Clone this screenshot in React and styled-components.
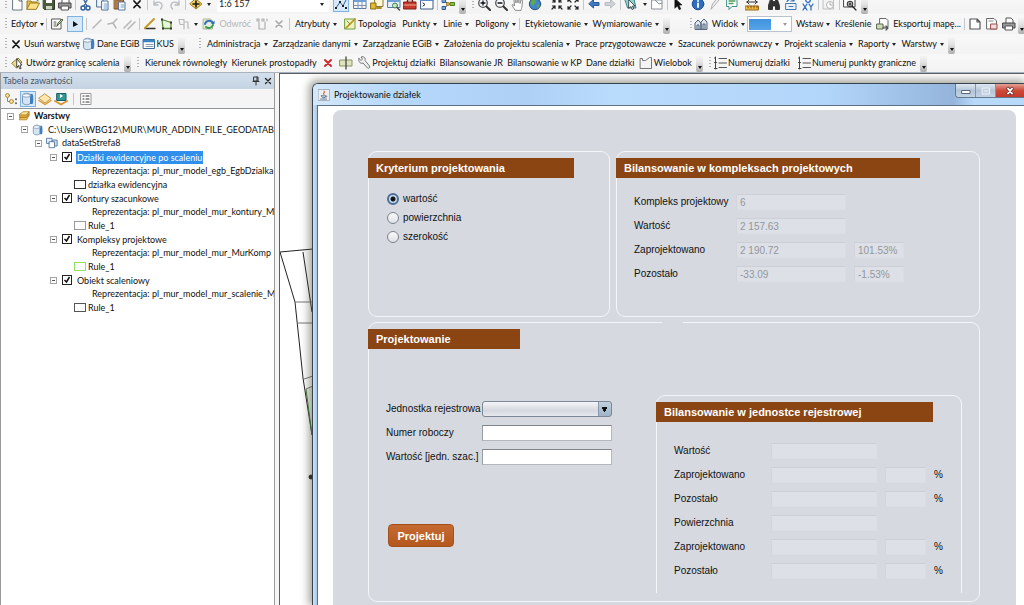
import { useId, useState } from 'react';
import styled, { createGlobalStyle, css } from 'styled-components';

const GlobalStyle = createGlobalStyle`
  * {
    box-sizing: border-box;
  }

  body {
    margin: 0;
    overflow: hidden;
    background: #f5f5f5;
    color: #111;
    font-family: Lato, 'Open Sans', sans-serif;
    font-size: 9px;
    line-height: 14px;
  }

  button,
  input,
  select {
    font: inherit;
    color: inherit;
    margin: 0;
  }
`;

const Page = styled.div`
  display: flex;
  flex-direction: column;
  height: 100vh;
`;

/* toolbars */

const Toolbars = styled.header`
  display: flex;
  flex-direction: column;
  flex: none;
  overflow: hidden;
`;

const Bar = styled.div`
  display: flex;
  align-items: center;
  flex: none;
  height: ${(p) => (p.$last ? 19 : 20)}px;
  padding-left: 5px;
  border-bottom: ${(p) => (p.$last ? '1px solid #a9b3be' : '0')};
  white-space: nowrap;
  background: linear-gradient(#f8f8f8, #f3f3f3);
`;

const CutBar = styled.div`
  display: flex;
  flex-direction: column;
  justify-content: flex-end;
  height: 14px;
  overflow: hidden;
`;

const Group = styled.div`
  display: flex;
  align-items: center;
  justify-content: space-between;
  flex: none;
  width: ${(p) => p.$w}px;
  margin-left: ${(p) => p.$ml ?? 4}px;
`;

const Grip = styled.span`
  flex: none;
  width: 2px;
  height: 12px;
  margin-left: ${(p) => p.$ml ?? 0}px;
  background: repeating-linear-gradient(#b4b4b4 0 1px, transparent 1px 3px);
`;

const Sep = styled.span`
  flex: none;
  width: 1px;
  height: 12px;
  margin: 0 3px;
  background: #c4c8cc;
`;

const Tool = styled.button`
  display: flex;
  align-items: center;
  gap: 1px;
  flex: none;
  height: 16px;
  padding: 0;
  border: 0;
  background: none;

  ${(p) =>
    p.$active &&
    css`
      justify-content: center;
      width: 16px;
      border: 1px solid #7fb2e0;
      background: #d6e9fa;
    `}

  &:disabled {
    color: #b5b5b5;
  }
`;

const Caret = styled.span`
  flex: none;
  margin-left: 2px;
  border: 2px solid transparent;
  border-top: 3px solid ${(p) => (p.$muted ? '#9a9a9a' : '#222')};
  border-bottom: 0;
`;

const More = styled.button`
  display: flex;
  align-items: flex-end;
  justify-content: center;
  flex: none;
  align-self: flex-end;
  width: 7px;
  height: 16px;
  margin-left: ${(p) => p.$ml ?? 4}px;
  padding: 0 0 3px;
  border: 0;
  border-radius: 0 0 2px 2px;
  background: linear-gradient(#f4f4f4, #e2e2e2 40%, #adadad);

  &::after {
    content: '';
    border: 2px solid transparent;
    border-top: 3px solid #111;
    border-bottom: 0;
  }
`;

const Combo = styled.button`
  display: flex;
  align-items: center;
  justify-content: space-between;
  flex: none;
  width: ${(p) => p.$w}px;
  height: 16px;
  margin-left: ${(p) => p.$ml}px;
  padding: 0 4px 0 1px;
  border: 1px solid ${(p) => (p.$framed ? '#b9c3ce' : 'transparent')};
  background: #fff;
  color: #222;
`;

const Marked = styled.span`
  width: 22px;
  height: 11px;
  background: linear-gradient(#3f92dd, #58a4e8);
`;

/* icons, all on a 14px square */

const Svg = styled.svg`
  flex: none;
  width: 14px;
  height: 14px;
  fill: none;
  stroke-linecap: round;
  stroke-linejoin: round;
`;

const drawings = {
  page: <path d="M3 1h6l3 3v9H3z M9 1v3h3" fill="#fff" stroke="#6b7683" />,
  open: (
    <>
      <path d="M1 12V4h4l1 1h5v2" fill="#e8c14a" stroke="#9a7a1c" />
      <path d="M1 12l3-6h9.500l-3 6z" fill="#fbe08a" stroke="#9a7a1c" />
      <path d="M8 2c2-1 3 0 4 2" stroke="#3f9a3f" strokeWidth="1.300" />
    </>
  ),
  save: (
    <>
      <path d="M1.500 1.500h11v11h-10l-1-1z" fill="#4b5a3c" stroke="#2c3524" />
      <path d="M4 2h6v4H4z" fill="#fff" />
      <path d="M4 9h6v3.500H4z" fill="#cfd6c8" />
    </>
  ),
  print: (
    <>
      <path d="M4 6V1h5l2 2v3" fill="#fff" stroke="#555" />
      <path d="M1 6h12v5H1z" fill="#9a9a9a" stroke="#444" />
      <path d="M3.500 9h7v4h-7z" fill="#fff" stroke="#555" />
    </>
  ),
  cut: (
    <>
      <path d="M4 1l4 8M9 1L5 9" stroke="#4a6f9c" strokeWidth="1.500" />
      <circle cx="4" cy="11" r="2" stroke="#2d5f9e" strokeWidth="1.400" />
      <circle cx="9" cy="11" r="2" stroke="#2d5f9e" strokeWidth="1.400" />
    </>
  ),
  copy: (
    <>
      <path d="M1 1h6v9H1z" fill="#eef4fb" stroke="#4e6f97" />
      <path d="M6 4h6v9H6z" fill="#fff" stroke="#4e6f97" />
      <path d="M8 7h3M8 9h3M8 11h3" stroke="#6f9bd0" />
    </>
  ),
  paste: (
    <>
      <path d="M1.500 2h9v10h-9z" fill="#b9773a" stroke="#7c4a1c" />
      <path d="M4 1h4v2H4z" fill="#ddd" stroke="#666" />
      <path d="M6 5h6v8H6z" fill="#fff" stroke="#5677a0" />
      <path d="M8 8h3M8 10h3" stroke="#6f9bd0" />
    </>
  ),
  cross: <path d="M4 4l6 6.500M10 4l-6 6.500" stroke="#151515" strokeWidth="1.800" />,
  crossGrey: <path d="M4 4l6 6M10 4l-6 6" stroke="#a8a8a8" strokeWidth="1.600" />,
  crossRed: <path d="M4 4l6 6M10 4l-6 6" stroke="#cf2630" strokeWidth="1.900" />,
  undo: <path d="M3 4v4h4M3 8c2-4 8-4 8 1 0 1-.500 2-1.500 3" stroke="#b9bdc2" strokeWidth="1.400" />,
  redo: <path d="M11 4v4H7M11 8c-2-4-8-4-8 1 0 1 .500 2 1.500 3" stroke="#b9bdc2" strokeWidth="1.400" />,
  add: (
    <>
      <path d="M7 2l6 5-6 5-6-5z" fill="#f3d25c" stroke="#a17f1c" />
      <path d="M7 4v6M4 7h6" stroke="#1c1c1c" strokeWidth="1.600" />
    </>
  ),
  editor: (
    <>
      <path d="M2 11l4-6 3 4 3-6" stroke="#3c5f8c" />
      <path d="M1 10h2v2H1zM5 4h2v2H5zM8 8h2v2H8zM11 10h2v2h-2z" fill="#222" />
    </>
  ),
  table: (
    <>
      <path d="M1 2.500h12v9H1z" fill="#f6faff" stroke="#57789f" />
      <path d="M1 3h12v2H1z" fill="#6fa0d8" />
      <path d="M1 8.500h12M5 5v6.500M9 5v6.500" stroke="#7b93ae" />
    </>
  ),
  catalog: (
    <>
      <path d="M5 1.500h8v8H5z" fill="#fff8d8" stroke="#8a7a3c" />
      <path d="M1 6h5v6H1z" fill="#e3b832" stroke="#8c6d14" />
      <path d="M7 11h4" stroke="#b18e22" strokeWidth="2" />
    </>
  ),
  search: (
    <>
      <path d="M1 2.500h12v8H1z" fill="#e5f0fa" stroke="#57789f" />
      <path d="M1 3h12v2H1z" fill="#6fa0d8" />
      <circle cx="8" cy="8.500" r="2.500" fill="#c8e8c0" stroke="#3f7f4f" />
      <path d="M10 10.500l2.500 2.500" stroke="#444" strokeWidth="1.400" />
    </>
  ),
  toolbox: (
    <>
      <path d="M4.500 5V2.500h5V5" stroke="#7c1c14" strokeWidth="1.300" />
      <path d="M1 5h12v7H1z" fill="#c8392c" stroke="#7c1c14" />
      <path d="M1 8h12" stroke="#f0b0a0" />
    </>
  ),
  console: (
    <>
      <path d="M1 2h12v10H1z" fill="#fff" stroke="#3d5a80" />
      <path d="M1 3h12" stroke="#5c8cc8" strokeWidth="2" />
      <path d="M3 6l2 1.500L3 9" stroke="#222" />
    </>
  ),
  model: (
    <>
      <path d="M4 4l3 3-3 4M7 7h3" stroke="#444" />
      <path d="M1.500 2.500h3v3h-3zM1.500 9.500h3v3h-3z" fill="#6fa8dc" stroke="#2e5b8c" />
      <path d="M9.500 5.500h4v3h-4z" fill="#8bc34a" stroke="#4a7c1c" />
      <circle cx="7" cy="7" r="1.500" fill="#f3c83c" stroke="#9a7a1c" />
    </>
  ),
  zoomIn: (
    <>
      <circle cx="6" cy="6" r="4.300" fill="#f4f9ff" stroke="#555" strokeWidth="1.300" />
      <path d="M9.500 9.500l3.500 3.500" stroke="#333" strokeWidth="2" />
      <path d="M4 6h4M6 4v4" stroke="#111" strokeWidth="1.300" />
    </>
  ),
  zoomOut: (
    <>
      <circle cx="6" cy="6" r="4.300" fill="#f4f9ff" stroke="#555" strokeWidth="1.300" />
      <path d="M9.500 9.500l3.500 3.500" stroke="#333" strokeWidth="2" />
      <path d="M4 6h4" stroke="#111" strokeWidth="1.300" />
    </>
  ),
  hand: (
    <path
      d="M4 13c-1-2-3-4-3-5s2 0 2.500 1L3 3.500c0-1 1.500-1 1.500 0L5 6V2c0-1 1.500-1 1.500 0L7 6l.500-4c.500-1 1.500-.500 1.500.500L9 6.500l1-3c.500-1 1.500-.500 1.500.500L11 9c0 2-1 3-1 4z"
      fill="#fff"
      stroke="#8a8a8a"
    />
  ),
  globe: (
    <>
      <circle cx="7" cy="7" r="5.700" fill="#3f86cf" stroke="#28527c" />
      <path d="M4 3c2-1 4 0 4 2s-2 1-2 3-2 1-3-1 0-3 1-4zM9 8c2-1 3 0 2 2s-2 1-2-2z" fill="#5fa84c" />
    </>
  ),
  shrink: (
    <path
      d="M2 2l3 3M5 2.500V5H2.500M12 2L9 5M9 2.500V5h2.500M2 12l3-3M5 11.500V9H2.500M12 12L9 9M9 11.500V9h2.500"
      stroke="#222"
      strokeWidth="1.200"
    />
  ),
  grow: (
    <path
      d="M2 2l3 3M2 4.500V2h2.500M12 2L9 5M12 4.500V2H9.500M2 12l3-3M2 9.500V12h2.500M12 12L9 9M12 9.500V12H9.500"
      stroke="#222"
      strokeWidth="1.200"
    />
  ),
  back: <path d="M6.500 3v2.500H12v3H6.500V11L2 7z" fill="#3f78c0" stroke="#2c5a98" />,
  forward: <path d="M7.500 3v2.500H2v3h5.500V11L12 7z" fill="#cfd3d8" stroke="#b8bcc2" />,
  select: (
    <>
      <path d="M1 2h9l2 9H4z" fill="#8fd4d0" stroke="#3b7f86" />
      <path d="M5 3l6 6H8.500l1 3-1.500.500-1-3L5 11z" fill="#fff" stroke="#333" strokeWidth=".8" />
    </>
  ),
  clear: <path d="M2 3h10v9H2zM5 3l4 4 3-1" fill="#fff" stroke="#8a929c" />,
  cursor: <path d="M4 1.500l7 6.500H8l1.800 4-1.600.700L6.500 9 4 11z" fill="#111" stroke="#111" strokeWidth=".6" />,
  info: (
    <>
      <circle cx="7" cy="7" r="5.800" fill="#2f6fc0" stroke="#1f4f90" />
      <path d="M7 6.500V10" stroke="#fff" strokeWidth="1.800" />
      <circle cx="7" cy="4" r="1" fill="#fff" />
    </>
  ),
  pen: <path d="M3 12l1.500-5L9 1.500l2 1.500L6 9z" fill="#eee" stroke="#b0b0b0" />,
  popup: (
    <>
      <path d="M2 1.500h10v8H7l-3 3v-3H2z" fill="#fff" stroke="#3f8f86" />
      <path d="M4 4h6M4 6.500h4" stroke="#4c9f5c" strokeWidth="1.300" />
    </>
  ),
  measure: (
    <>
      <path d="M2 5h10M2 5l2-2M2 5l2 2M12 5l-2-2M12 5l-2 2" stroke="#333" />
      <path d="M.5 9h13v4H.5z" fill="#f0b94a" stroke="#9a6d14" />
      <path d="M3 9v2M6 9v2M9 9v2M12 9v2" stroke="#7c5410" />
    </>
  ),
  find: (
    <path
      d="M4 1.500h1.500v3h3v-3H10l2.500 7v4H8.500V9h-3v3.500h-4v-4z"
      fill="#333"
      stroke="#222"
      strokeWidth=".8"
    />
  ),
  route: (
    <>
      <path d="M2 6.500h10v6H2z" fill="#eaf3fc" stroke="#4677ac" />
      <path d="M3 4.500c2-3 4-3 7-1M10 1v3H7" stroke="#2f6fc0" strokeWidth="1.200" />
      <path d="M5 9.500h4" stroke="#4677ac" />
    </>
  ),
  xy: (
    <>
      <circle cx="7" cy="3" r="2.300" stroke="#2f6fc0" strokeWidth="1.300" />
      <path d="M2 7l4 6M6 7l-4 6M8 7l2 3 2-3M10 10v3" stroke="#2f6fc0" strokeWidth="1.300" />
    </>
  ),
  time: (
    <>
      <path d="M1.500 2h10v10h-10z" fill="#f3f3f3" stroke="#c0c0c0" />
      <circle cx="8" cy="8" r="3.500" fill="#fff" stroke="#b4b4b4" />
      <path d="M8 6v2h2" stroke="#a4a4a4" />
    </>
  ),
  viewer: (
    <>
      <path d="M1 2h11v8H1z" fill="#fff" stroke="#444" />
      <circle cx="7" cy="7" r="2.700" fill="#fff" stroke="#444" strokeWidth="1.200" />
      <path d="M5.800 7h2.400M7 5.800v2.400M9 9l4 4" stroke="#222" strokeWidth="1.200" />
    </>
  ),
  sheet: (
    <>
      <path d="M2 2h9v10H2z" fill="#fff" stroke="#555" />
      <path d="M4 5h2M4 7h2M4 9h2" stroke="#555" />
      <path d="M7 9l1-3 4-4 1 1-4 4z" fill="#cfe0a8" stroke="#4d5f38" />
    </>
  ),
  play: <path d="M5 4l5 3.500L5 10z" fill="#111" />,
  line: <path d="M3 11l8-8" stroke="#b6b6b6" strokeWidth="1.500" />,
  bend: <path d="M2 7l5-1 4-4M7 6l3 5" stroke="#b6b6b6" strokeWidth="1.500" />,
  parallel: <path d="M2 11l7-7M6 12l7-7" stroke="#b6b6b6" strokeWidth="1.500" />,
  sketch: (
    <>
      <path d="M2 11.500h10" stroke="#333" strokeWidth="1.400" />
      <path d="M2 11l9-9" stroke="#c39a24" strokeWidth="2" />
    </>
  ),
  polygon: (
    <>
      <path d="M2 2.500l9 3v6H3z" fill="#eaf5dd" stroke="#5c8c34" strokeWidth="1.300" />
      <path d="M1 1.500h2v2H1zM10 4.500h2v2h-2zM10 10.500h2v2h-2zM2 10.500h2v2H2z" fill="#333" />
    </>
  ),
  split: <path d="M2 2.500h5v5H3zM7 5h4v6M7 7.500V12M11 11h1" stroke="#b9b9b9" strokeWidth="1.200" />,
  refresh: (
    <>
      <path d="M1.500 2h7l2 2v8h-9z" fill="#e7edd8" stroke="#a9b58c" />
      <path d="M3 7c1-4 6-4 8-1" stroke="#2f6fc0" strokeWidth="2" />
      <path d="M11 8c-1 3-5 4-7 2" stroke="#3c9a54" strokeWidth="2" />
      <path d="M12.500 3.500v3.500H9z" fill="#2f6fc0" />
    </>
  ),
  vertices: <path d="M2 2h2v2H2zM7 2h2v2H7zM10 5v7H4V5M12 2v2" stroke="#b0b0b0" strokeWidth="1.200" />,
  topology: (
    <>
      <path d="M2 2h10v10H2z" fill="#eef3c0" stroke="#6e9c3c" />
      <path d="M3 11l9-9" stroke="#b8921c" strokeWidth="1.700" />
      <path d="M4 4l3 3" stroke="#6e9c3c" />
    </>
  ),
  houses: (
    <>
      <path d="M1 12V6l3-3 3 3v6zM7 12V5l3-3 3 3v7z" fill="#dfe7ef" stroke="#4b6078" />
      <path d="M3 12V8h2v4M9 12V7h2v5" stroke="#4b6078" />
    </>
  ),
  exportMap: (
    <>
      <path d="M4 1.500h6l2 2V10H4z" fill="#fff" stroke="#666" />
      <path d="M1 7h6v5H1z" fill="#cfd8c0" stroke="#5c6b48" />
      <path d="M7 11h5M10 9l2 2-2 2" stroke="#555" strokeWidth="1.200" />
    </>
  ),
  layout: <path d="M2 2h7l3 3v7H2zM9 2v3h3" fill="#fff" stroke="#555" strokeWidth="1.200" />,
  pageRed: (
    <>
      <path d="M2 1.500h7l2.500 2.500v8H2z" fill="#fff" stroke="#666" />
      <path d="M6 7h6v5H6z" fill="#f0dede" stroke="#9a4a4a" />
      <path d="M4 4h4" stroke="#888" />
    </>
  ),
  database: (
    <>
      <path d="M1.500 3.500c0-3 8-3 8 0v7c0 3-8 3-8 0z" fill="#d4e4f2" stroke="#7a96b4" />
      <path d="M9 2h2.500c1 1 1 9 0 10H9z" fill="#3f7fc0" />
      <ellipse cx="5.500" cy="3.500" rx="4" ry="1.700" fill="#f6faff" stroke="#8aa2bc" />
    </>
  ),
  grid: (
    <>
      <path d="M1.500 2.500h11v9h-11z" fill="#fff" stroke="#3a6a96" />
      <path d="M2 4h10" stroke="#3d82c0" strokeWidth="2.500" />
      <path d="M4 7.500h7M4 9.500h7" stroke="#8c9cac" />
    </>
  ),
  boundary: (
    <>
      <path d="M1 7l6-5 4 4-5 6z" fill="#e9dd8c" stroke="#8c7b2c" />
      <path d="M6 3l5 6H9l1 3.500-1.300.300L7.500 9.500 6 11z" fill="#fff" stroke="#333" strokeWidth=".9" />
    </>
  ),
  parcelSplit: (
    <>
      <path d="M1 4h12v6H1z" fill="#dfe4bc" stroke="#8c9468" />
      <path d="M7 1v12" stroke="#444" strokeWidth="1.300" />
    </>
  ),
  wrench: (
    <path
      d="M2 2.500L4 4.500 5.500 3 4 1c3-1 5 1 4 3.500l4.500 5.500c1 1.500-1 3-2 2L6 7C3.500 8 1 6 2 2.500z"
      fill="#f0f0f0"
      stroke="#777"
    />
  ),
  multi: <path d="M1.500 2.500h2v2h3l4-3h2v11h-11z" fill="#f4f4f4" stroke="#777" />,
  numbers: (
    <>
      <path d="M6 2.500h7.500M6 7h7.500M6 11.500h7.500" stroke="#555" />
      <path d="M2.500 1v12M1.500 2h1M1.500 6.500h2M1.500 12.500h2.500" stroke="#444" />
    </>
  ),
  listTree: (
    <>
      <circle cx="3.500" cy="3.500" r="2" fill="#f4e2a0" stroke="#a98c34" />
      <circle cx="7.500" cy="9.500" r="2" fill="#f4e2a0" stroke="#a98c34" />
      <path d="M3.500 6v3.500h2" stroke="#888" />
      <path d="M12 7v.500M12 11v.500" stroke="#333" strokeWidth="1.500" />
    </>
  ),
  visibility: (
    <>
      <path d="M7 2l6 4.500L7 11 1 6.500z" fill="#fde9b0" stroke="#c9933c" />
      <path d="M1 8.500l6 4 6-4" stroke="#d8932c" strokeWidth="1.400" />
    </>
  ),
  selection: (
    <>
      <path d="M3 1.500h9v7H3z" fill="#2f9a94" stroke="#1f5f6c" />
      <path d="M6 2v4l3-2z" fill="#fff" />
      <path d="M1 9l6 3.500 6-3.500" stroke="#d8932c" strokeWidth="1.800" />
    </>
  ),
  options: (
    <>
      <path d="M2 1.500h10v11H2z" fill="#fff" stroke="#999" />
      <path d="M4 4h1M4 7h1M4 10h1M7 4h3M7 7h3M7 10h3" stroke="#333" strokeWidth="1.200" />
    </>
  ),
  layers: (
    <>
      <path d="M2 5l4-3h7l-3 4H2z" fill="#fbe694" stroke="#b8862c" />
      <path d="M2 7.500V6h8l3-4v2l-3 4.500H2zM2 10V8.500h8l3-4v2l-3 5H2z" fill="#f0c050" stroke="#a8701c" strokeWidth=".8" />
    </>
  ),
  dataset: (
    <>
      <path d="M1 1.500h6v6H1z" fill="#e4eef8" stroke="#4d7098" />
      <path d="M8 3.500h5v7H8z" fill="#cfe0f2" stroke="#4d7098" />
      <path d="M4 5.500h6v7H4z" fill="#fff" stroke="#4d7098" />
    </>
  ),
  java: (
    <>
      <path d="M.5.500h13v13H.5z" fill="#eceef0" stroke="#9aa4ae" />
      <path d="M7 2.500c2 1.500-2 2.500 0 4" stroke="#d0642c" strokeWidth="1.200" />
      <path d="M4 8h5c0 3-5 3-5 0zM9 8c2-.500 2 1.500 0 1.500M3 11.700h7" stroke="#4c6888" />
    </>
  ),
};

const Icon = ({ name }) => (
  <Svg viewBox="0 0 14 14" aria-hidden="true">
    {drawings[name]}
  </Svg>
);

const IconTool = ({ name, ...rest }) => (
  <Tool type="button" aria-label={name} {...rest}>
    <Icon name={name} />
  </Tool>
);

const IconGroup = ({ names, ...rest }) => (
  <Group {...rest}>
    {names.map((name) => (
      <IconTool key={name} name={name} />
    ))}
  </Group>
);

const Menu = ({ children }) => (
  <Tool type="button">
    {children}
    <Caret />
  </Tool>
);

const StandardBar = () => (
  <CutBar>
    <Bar>
      <Grip />
      <IconGroup $w={62} $ml={3} names={['page', 'open', 'save', 'print']} />
      <Sep />
      <IconGroup $w={65} $ml={0} names={['cut', 'copy', 'paste', 'cross']} />
      <Sep />
      <IconGroup $w={31} $ml={0} names={['undo', 'redo']} />
      <Sep />
      <Group $w={22} $ml={0}>
        <IconTool name="add" />
        <Caret />
      </Group>
      <Combo type="button" $w={112} $ml={6}>
        1:6 157
        <Caret />
      </Combo>
      <Group $w={16}>
        <IconTool name="editor" $active />
      </Group>
      <IconGroup $w={81} names={['table', 'catalog', 'search', 'toolbox', 'console']} />
      <Sep />
      <IconTool name="model" />
      <More type="button" aria-label="więcej" />
      <Grip $ml={6} />
      <IconGroup $w={65} $ml={3} names={['zoomIn', 'zoomOut', 'hand', 'globe']} />
      <IconGroup $w={30} $ml={8} names={['shrink', 'grow']} />
      <Sep />
      <IconGroup $w={30} $ml={0} names={['back', 'forward']} />
      <Sep />
      <Group $w={40} $ml={0}>
        <IconTool name="select" />
        <Caret />
        <IconTool name="clear" />
      </Group>
      <Sep />
      <IconTool name="cursor" />
      <IconGroup $w={48} $ml={6} names={['info', 'pen', 'popup']} />
      <IconGroup $w={14} $ml={6} names={['measure']} />
      <IconGroup $w={48} $ml={8} names={['find', 'route', 'xy']} />
      <Sep />
      <IconTool name="time" />
      <Sep />
      <IconTool name="viewer" />
      <More type="button" aria-label="więcej" />
    </Bar>
  </CutBar>
);

const EditorBar = () => (
  <Bar>
    <Grip />
    <Group $w={32}>
      <Menu>Edytor</Menu>
    </Group>
    <Sep />
    <Group $w={33} $ml={0}>
      <IconTool name="sheet" />
      <IconTool name="play" $active />
    </Group>
    <Sep />
    <IconGroup $w={46} $ml={0} names={['line', 'bend', 'parallel']} />
    <Sep />
    <Group $w={55} $ml={0}>
      <IconTool name="sketch" />
      <IconTool name="polygon" />
      <Tool type="button" aria-label="split">
        <Icon name="split" />
        <Caret />
      </Tool>
    </Group>
    <Group $w={84}>
      <IconTool name="refresh" />
      <Tool type="button" disabled>
        Odwróć
      </Tool>
      <IconTool name="vertices" />
      <IconTool name="crossGrey" />
    </Group>
    <Sep />
    <Group $w={221} $ml={2}>
      <Menu>Atrybuty</Menu>
      <Tool type="button">
        <Icon name="topology" />
        Topologia
      </Tool>
      <Menu>Punkty</Menu>
      <Menu>Linie</Menu>
      <Menu>Poligony</Menu>
    </Group>
    <Sep />
    <Group $w={134} $ml={2}>
      <Menu>Etykietowanie</Menu>
      <Menu>Wymiarowanie</Menu>
    </Group>
    <More type="button" aria-label="więcej" />
    <Grip $ml={20} />
    <Group $w={51} $ml={2}>
      <IconTool name="houses" />
      <Menu>Widok</Menu>
    </Group>
    <Combo type="button" aria-label="skala" $w={45} $ml={2} $framed>
      <Marked />
      <Caret $muted />
    </Combo>
    <Group $w={165}>
      <Menu>Wstaw</Menu>
      <Tool type="button">Kreślenie</Tool>
      <Tool type="button">
        <Icon name="exportMap" />
        &nbsp;Eksportuj mapę...
      </Tool>
    </Group>
    <Sep />
    <IconGroup $w={48} $ml={0} names={['layout', 'pageRed', 'print']} />
    <More type="button" aria-label="więcej" $ml={2} />
  </Bar>
);

const menus = [
  'Administracja',
  'Zarządzanie danymi',
  'Zarządzanie EGiB',
  'Założenia do projektu scalenia',
  'Prace przygotowawcze',
  'Szacunek porównawczy',
  'Projekt scalenia',
  'Raporty',
  'Warstwy',
];

const MenuBar = () => (
  <Bar>
    <Grip />
    <Group $w={165} $ml={2}>
      <Tool type="button">
        <Icon name="cross" />
        Usuń warstwę
      </Tool>
      <Tool type="button">
        <Icon name="database" />
        Dane EGiB
      </Tool>
      <Tool type="button">
        <Icon name="grid" />
        KUS
      </Tool>
    </Group>
    <More type="button" aria-label="więcej" />
    <Grip $ml={14} />
    <Group $w={737} $ml={6}>
      {menus.map((name) => (
        <Menu key={name}>{name}</Menu>
      ))}
    </Group>
    <More type="button" aria-label="więcej" />
  </Bar>
);

const MurBar = () => (
  <Bar $last>
    <Grip />
    <Group $w={111}>
      <Tool type="button">
        <Icon name="boundary" />
        Utwórz granicę scalenia
      </Tool>
    </Group>
    <More type="button" aria-label="więcej" $ml={2} />
    <Grip $ml={6} />
    <Group $w={547} $ml={6}>
      <Tool type="button">Kierunek równoległy</Tool>
      <Tool type="button">Kierunek prostopadły</Tool>
      <IconTool name="crossRed" />
      <IconTool name="parcelSplit" />
      <Tool type="button">
        <Icon name="wrench" />
        Projektuj działki
      </Tool>
      <Tool type="button">Bilansowanie JR</Tool>
      <Tool type="button">Bilansowanie w KP</Tool>
      <Tool type="button">Dane działki</Tool>
      <Tool type="button">
        <Icon name="multi" />
        Wielobok
      </Tool>
    </Group>
    <More type="button" aria-label="więcej" />
    <Grip $ml={6} />
    <Group $w={203} $ml={2}>
      <Tool type="button">
        <Icon name="numbers" />
        Numeruj działki
      </Tool>
      <Tool type="button">
        <Icon name="numbers" />
        Numeruj punkty graniczne
      </Tool>
    </Group>
    <More type="button" aria-label="więcej" />
  </Bar>
);

/* table of contents */

const Body = styled.main`
  display: flex;
  flex: 1;
  min-height: 0;
`;

const Side = styled.aside`
  display: flex;
  flex-direction: column;
  flex: none;
  width: 275px;
  border: solid #9a9a9a;
  border-width: 0 1px;
`;

const SideTitle = styled.div`
  display: flex;
  align-items: center;
  justify-content: space-between;
  height: 16px;
  padding: 0 1px 0 2px;
  background: linear-gradient(#d3dfec, #c5d3e3);
  color: #47566a;
`;

const SideButtons = styled.span`
  display: flex;
  gap: 2px;
`;

const SideButton = styled.button`
  display: flex;
  padding: 1px 0;
  border: 0;
  background: none;

  svg {
    width: 10px;
    height: 10px;
  }
`;

const SideTools = styled.div`
  display: flex;
  align-items: center;
  gap: 2px;
  height: 20px;
  padding-left: 3px;
  border-bottom: 1px solid #8e959c;
`;

const Tree = styled.div`
  flex: 1;
  overflow: hidden;
  background: #fff;
`;

const Node = styled.div`
  display: flex;
  align-items: center;
  gap: ${(p) => p.$gap ?? 4}px;
  height: ${(p) => p.$h ?? 14}px;
  padding-left: ${(p) => p.$indent}px;
  white-space: nowrap;
  font-weight: ${(p) => (p.$bold ? 700 : 400)};

  > svg {
    width: 12px;
    height: 12px;
  }
`;

const Toggle = styled.button`
  flex: none;
  width: 7px;
  height: 7px;
  padding: 0;
  border: 1px solid #a4a4a4;
  background: linear-gradient(#555, #555) center / 3px 1px no-repeat #fff;
`;

const LayerLabel = styled.label`
  display: flex;
  align-items: center;
  gap: 4px;
`;

const LayerName = styled.span`
  height: 13px;
  padding: 0 1px;
  line-height: 13px;
  background: ${(p) => (p.$selected ? '#2f8fea' : 'none')};
  color: ${(p) => (p.$selected ? '#fff' : 'inherit')};
`;

const Tick = styled.input`
  appearance: none;
  flex: none;
  width: 10px;
  height: 10px;
  border: 1px solid #222;
  background: #fff;

  &:checked {
    background: #fff
      url("data:image/svg+xml,%3Csvg xmlns='http://www.w3.org/2000/svg' viewBox='0 0 8 8'%3E%3Cpath d='M1.500 4l2 2 3-5' fill='none' stroke='%23111' stroke-width='1.500'/%3E%3C/svg%3E");
  }
`;

const Swatch = styled.span`
  flex: none;
  width: 12px;
  height: 9px;
  border: 1px solid ${(p) => p.$color};
`;

const layers = [
  { name: 'Działki ewidencyjne po scaleniu', rep: 'pl_mur_model_egb_EgbDzialka', rule: 'działka ewidencyjna', color: '#333' },
  { name: 'Kontury szacunkowe', rep: 'pl_mur_model_mur_kontury_M', rule: 'Rule_1', color: '#9a9a9a' },
  { name: 'Kompleksy projektowe', rep: 'pl_mur_model_mur_MurKomp', rule: 'Rule_1', color: '#93e065' },
  { name: 'Obiekt scaleniowy', rep: 'pl_mur_model_mur_scalenie_M', rule: 'Rule_1', color: '#555' },
];

const Layer = ({ layer, selected }) => {
  const [visible, setVisible] = useState(true);

  return (
    <>
      <Node $indent={49} $gap={5}>
        <Toggle type="button" aria-label="zwiń" />
        <LayerLabel>
          <Tick type="checkbox" checked={visible} onChange={() => setVisible(!visible)} />
          <LayerName $selected={selected}>{layer.name}</LayerName>
        </LayerLabel>
      </Node>
      <Node $indent={91}>Reprezentacja: {layer.rep}</Node>
      <Node $indent={73} $gap={2} $h={13}>
        <Swatch $color={layer.color} />
        {layer.rule}
      </Node>
    </>
  );
};

const Contents = () => (
  <Side>
    <SideTitle>
      Tabela zawartości
      <SideButtons>
        <SideButton type="button" aria-label="przypnij">
          <Svg viewBox="0 0 10 10">
            <path d="M3 1h4v4H3zM6 1v4M2 5.500h6M5 6v3" stroke="#333" />
          </Svg>
        </SideButton>
        <SideButton type="button" aria-label="zamknij">
          <Svg viewBox="0 0 10 10">
            <path d="M2.500 2.500l5 5M7.500 2.500l-5 5" stroke="#222" strokeWidth="1.300" />
          </Svg>
        </SideButton>
      </SideButtons>
    </SideTitle>
    <SideTools>
      <IconTool name="listTree" />
      <IconTool name="database" $active />
      <IconTool name="visibility" />
      <IconTool name="selection" />
      <Sep />
      <IconTool name="options" />
    </SideTools>
    <Tree>
      <Node $indent={6} $bold>
        <Toggle type="button" aria-label="zwiń" />
        <Icon name="layers" />
        Warstwy
      </Node>
      <Node $indent={20} $h={13}>
        <Toggle type="button" aria-label="zwiń" />
        <Icon name="database" />
        C:\Users\WBG12\MUR\MUR_ADDIN_FILE_GEODATABASE
      </Node>
      <Node $indent={34}>
        <Toggle type="button" aria-label="zwiń" />
        <Icon name="dataset" />
        dataSetStrefa8
      </Node>
      {layers.map((layer, i) => (
        <Layer key={layer.name} layer={layer} selected={i === 0} />
      ))}
    </Tree>
  </Side>
);

/* map with the dialog over it */

const MapPane = styled.section`
  position: relative;
  flex: 1;
  min-width: 0;
  margin-left: 4px;
  border: solid #5a5f66;
  border-width: 1px 0 0 1px;
  background: #fff;
  overflow: hidden;
`;

const Parcels = styled.svg`
  display: block;
  width: 33px;
  height: 530px;
  fill: none;
  stroke: #222;
`;

const Dialog = styled.div`
  position: absolute;
  inset: 9px 0 0 32px;
  display: flex;
  flex-direction: column;
  padding-left: 4px;
  border: solid #36434f;
  border-width: 1px 0 0 1px;
  border-radius: 6px 0 0 0;
  background: linear-gradient(90deg, #d0e4f8, #9dc0e6 5px);
  box-shadow: -1px -1px 8px 2px rgba(70, 70, 50, 0.5);
  font-family: 'Liberation Sans', Arial, sans-serif;
  font-size: 10px;
  white-space: nowrap;
`;

const DialogTitle = styled.div`
  display: flex;
  align-items: center;
  gap: 4px;
  height: 21px;
  margin-left: -4px;
  padding-left: 5px;
  border-radius: 5px 0 0 0;
  background: linear-gradient(90deg, #d4e8fb, #b5d8fb 12%, #aed0f5 30%, #b9dbfc 42%, #b2d6f9 72%, #94b4dc 90%, #b7dafb 93%);
  font-family: Lato, 'Open Sans', sans-serif;
  font-size: 9px;

  > svg {
    width: 12px;
    height: 12px;
  }
`;

const WindowButtons = styled.div`
  display: flex;
  align-self: flex-start;
  margin-left: auto;
  border: 1px solid #66788e;
  border-width: 0 0 1px 1px;
  border-radius: 0 0 0 4px;
  overflow: hidden;
`;

const WindowButton = styled.button`
  display: flex;
  align-items: center;
  justify-content: center;
  width: ${(p) => (p.$close ? 28 : 20)}px;
  height: 13px;
  padding: 0;
  border: 0;
  border-right: ${(p) => (p.$close ? 0 : 1)}px solid #8496aa;
  background: ${(p) =>
    p.$close ? 'linear-gradient(#e3a297, #cc4a38 50%, #c23b2c)' : 'linear-gradient(#dfe8f2, #b4c4d6 50%, #c3d3e4)'};

  svg {
    width: 12px;
    height: 12px;
  }
`;

const Client = styled.div`
  display: flex;
  flex: 1;
  min-height: 0;
  padding: 4px 8px 0 15px;
  border: solid #5f7085;
  border-width: 1px 0 0 1px;
  background: #fff;
`;

const Panel = styled.form`
  display: grid;
  grid-template-columns: 242fr 364fr;
  grid-template-rows: 166px 280px;
  align-content: start;
  gap: 5px 6px;
  flex: 1;
  padding: 41px 36px 0 35px;
  border-radius: 8px 8px 0 0;
  background: #d6d9e0;
`;

const Box = styled.section`
  position: relative;
  display: flex;
  flex-direction: column;
  padding-top: 6px;
  border: 1px solid #f4f5f8;
  border-radius: 9px;

  ${(p) =>
    p.$wide &&
    css`
      grid-column: 1 / -1;

      /* empty caption that interrupts the frame */
      &::before {
        content: '';
        position: absolute;
        top: -1px;
        left: 48%;
        width: 21px;
        height: 1px;
        background: #d6d9e0;
      }
    `}
`;

const Heading = styled.h2`
  flex: none;
  align-self: flex-start;
  width: ${(p) => p.$w}px;
  height: 20px;
  margin: 0 0 0 -1px;
  padding-left: 8px;
  background: #8b4513;
  color: #fff;
  font-size: 11px;
  font-weight: 700;
  line-height: 21px;
`;

const Radios = styled.div`
  display: flex;
  flex-direction: column;
  padding: 11px 0 0 18px;
`;

const RadioLabel = styled.label`
  display: flex;
  align-items: center;
  gap: 4px;
  height: 19px;
`;

const Radio = styled.input`
  appearance: none;
  width: 12px;
  height: 12px;
  border: 1px solid #7c838c;
  border-radius: 50%;
  background: linear-gradient(#fbfbfc, #dde0e6);

  &:checked {
    border: 2px solid #4b6f95;
    background: radial-gradient(circle, #111 0 2px, #c8dcf0 3px);
  }
`;

const Rows = styled.div`
  display: flex;
  flex-direction: column;
  gap: 8px;
  padding: ${(p) => p.$top}px 0 0 17px;
`;

const Row = styled.div`
  display: flex;
  align-items: center;
  gap: 8px;
  height: 16px;
`;

const Label = styled.label`
  flex: none;
  width: ${(p) => p.$w}px;
`;

const Field = styled.input`
  flex: none;
  width: ${(p) => p.$w}px;
  height: 16px;
  padding: 0 3px;
  border: 1px solid;
  border-color: #80858d #b4b8be #b4b8be #9a9fa7;
  border-radius: 0;
  background: #fff;

  &:disabled {
    border-color: #ccd0d6 #dadde3 #dadde3 #d2d5dc;
    background: #dde0e6;
    color: #94979c;
  }
`;

const Select = styled.select`
  appearance: none;
  width: 130px;
  height: 16px;
  padding: 0 14px 0 4px;
  border: 1px solid #7b8796;
  border-radius: 3px;
  background:
    linear-gradient(#111, #111) right 4px top 5px / 5px 1px no-repeat,
    linear-gradient(#111, #111) right 4px top 6px / 5px 1px no-repeat,
    linear-gradient(#111, #111) right 5px top 7px / 3px 1px no-repeat,
    linear-gradient(#111, #111) right 5px top 8px / 3px 1px no-repeat,
    linear-gradient(#111, #111) right 6px top 9px / 1px 1px no-repeat,
    linear-gradient(#8796a8, #8796a8) right 12px top 0 / 1px 100% no-repeat,
    linear-gradient(#c2d0de, #9fb4c9) right / 12px 100% no-repeat,
    linear-gradient(#f4f5f7, #d5d8de 60%, #e6e9ee);
`;

const Split = styled.div`
  display: flex;
  flex: 1;
  justify-content: space-between;
  padding-right: 17px;
`;

const Design = styled.div`
  display: flex;
  flex-direction: column;
  align-items: flex-start;
`;

const Submit = styled.button`
  width: 66px;
  height: 23px;
  margin: 59px 0 0 19px;
  padding: 0;
  border: 1px solid #a4501c;
  border-radius: 4px;
  background: linear-gradient(#c46a30, #b5581f);
  color: #fff;
  font-size: 11px;
  font-weight: 700;
`;

const Balance = styled.section`
  width: 306px;
  height: 198px;
  margin-top: 66px;
  padding-top: 6px;
  border: 1px solid #f4f5f8;
  border-bottom: 0;
  border-radius: 9px 9px 0 0;
`;

const LabeledField = ({ label, labelWidth, width, ...rest }) => {
  const id = useId();

  return (
    <>
      <Label htmlFor={id} $w={labelWidth}>
        {label}
      </Label>
      <Field id={id} type="text" $w={width} {...rest} />
    </>
  );
};

const complex = [
  ['Kompleks projektowy', '6'],
  ['Wartość', '2 157.63'],
  ['Zaprojektowano', '2 190.72', '101.53%'],
  ['Pozostało', '-33.09', '-1.53%'],
];

const unit = [
  ['Wartość'],
  ['Zaprojektowano', true],
  ['Pozostało', true],
  ['Powierzchnia'],
  ['Zaprojektowano', true],
  ['Pozostało', true],
];

const DesignDialog = () => {
  const [criterion, setCriterion] = useState('wartość');

  return (
    <Dialog role="dialog" aria-label="Projektowanie działek">
      <DialogTitle>
        <Icon name="java" />
        Projektowanie działek
        <WindowButtons>
          <WindowButton type="button" aria-label="minimalizuj">
            <Svg viewBox="0 0 12 12">
              <path d="M2 5.500h8v3H2z" fill="#fff" stroke="#56677a" />
            </Svg>
          </WindowButton>
          <WindowButton type="button" aria-label="maksymalizuj">
            <Svg viewBox="0 0 12 12">
              <path d="M2.500 3h7v6h-7zM4.500 6h3" fill="#c3d1df" stroke="#eef3f8" />
            </Svg>
          </WindowButton>
          <WindowButton type="button" aria-label="zamknij" $close>
            <Svg viewBox="0 0 12 12">
              <path d="M4 3.500l4 5M8 3.500l-4 5" stroke="#6a2a24" strokeWidth="3.400" />
              <path d="M4 3.500l4 5M8 3.500l-4 5" stroke="#fff" strokeWidth="2" />
            </Svg>
          </WindowButton>
        </WindowButtons>
      </DialogTitle>
      <Client>
        <Panel onSubmit={(e) => e.preventDefault()}>
          <Box>
            <Heading $w={206}>Kryterium projektowania</Heading>
            <Radios>
              {['wartość', 'powierzchnia', 'szerokość'].map((name) => (
                <RadioLabel key={name}>
                  <Radio
                    type="radio"
                    name="criterion"
                    checked={criterion === name}
                    onChange={() => setCriterion(name)}
                  />
                  {name}
                </RadioLabel>
              ))}
            </Radios>
          </Box>
          <Box>
            <Heading $w={304}>Bilansowanie w kompleksach projektowych</Heading>
            <Rows $top={16}>
              {complex.map(([label, value, percent]) => (
                <Row key={label}>
                  <LabeledField label={label} labelWidth={94} width={110} value={value} disabled />
                  {percent && <Field $w={50} value={percent} aria-label={`${label} %`} disabled />}
                </Row>
              ))}
            </Rows>
          </Box>
          <Box $wide>
            <Split>
              <Design>
                <Heading $w={152}>Projektowanie</Heading>
                <Rows $top={52}>
                  <Row>
                    <Label htmlFor="unit" $w={88}>
                      Jednostka rejestrowa
                    </Label>
                    <Select id="unit" />
                  </Row>
                  <Row>
                    <LabeledField label="Numer roboczy" labelWidth={88} width={130} />
                  </Row>
                  <Row>
                    <LabeledField label="Wartość [jedn. szac.]" labelWidth={88} width={130} />
                  </Row>
                </Rows>
                <Submit type="submit">Projektuj</Submit>
              </Design>
              <Balance>
                <Heading as="h3" $w={277}>
                  Bilansowanie w jednostce rejestrowej
                </Heading>
                <Rows $top={21}>
                  {unit.map(([label, percent], i) => (
                    <Row key={i}>
                      <LabeledField label={label} labelWidth={89} width={106} disabled />
                      {percent && (
                        <>
                          <Field $w={41} aria-label={`${label} %`} disabled />%
                        </>
                      )}
                    </Row>
                  ))}
                </Rows>
              </Balance>
            </Split>
          </Box>
        </Panel>
      </Client>
    </Dialog>
  );
};

const App = () => (
  <>
    <GlobalStyle />
    <Page>
      <Toolbars>
        <StandardBar />
        <EditorBar />
        <MenuBar />
        <MurBar />
      </Toolbars>
      <Body>
        <Contents />
        <MapPane>
          <Parcels viewBox="0 -1 33 530">
            <path d="M26 314l6-3v47z" fill="#eaf3e4" stroke="none" />
            <path d="M0 177l33-3M0 177l15 50 8 76 9 57M23 177l9 60" />
            <path d="M15 227h18M17 248h16M24 304l9-3M26 314l7-3" stroke="#777" />
            <path d="M26 314l6 46" stroke="#3f7f3f" />
            <circle cx="31" cy="402" r="2" fill="#222" />
          </Parcels>
          <DesignDialog />
        </MapPane>
      </Body>
    </Page>
  </>
);

export default App;
